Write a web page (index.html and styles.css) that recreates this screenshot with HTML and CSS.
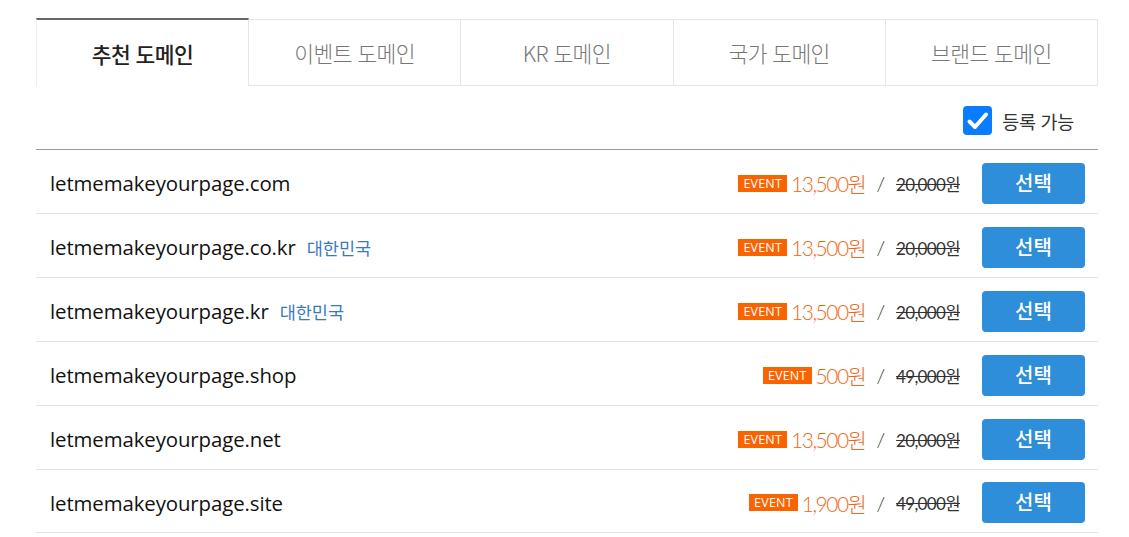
FILE: index.html
```html
<!DOCTYPE html>
<html lang="ko">
<head>
<meta charset="utf-8">
<link rel="stylesheet" href="styles.css">
</head>
<body>
<div class="wrap">
  <div class="tabs">
    <div class="tab active">추천 도메인</div>
    <div class="tab">이벤트 도메인</div>
    <div class="tab">KR 도메인</div>
    <div class="tab">국가 도메인</div>
    <div class="tab">브랜드 도메인</div>
  </div>
  <div class="filter">
    <span class="check"><svg viewBox="0 0 29 29" width="29" height="29"><rect x="0" y="0" width="29" height="29" rx="4" fill="#0a7cff"/><path d="M6.5 15.5 L12 21 L23 8.5" fill="none" stroke="#fff" stroke-width="4" stroke-linecap="round" stroke-linejoin="round"/></svg></span>
    <span class="filter-label">등록 가능</span>
  </div>
  <div class="list">
    <div class="row">
      <div class="name">letmemakeyourpage.com</div>
      <div class="price"><span class="badge">EVENT</span><span class="sale">13,500원</span><span class="slash">/</span><span class="orig">20,000원</span></div>
      <button class="btn">선택</button>
    </div>
    <div class="row">
      <div class="name">letmemakeyourpage.co.kr<span class="country">대한민국</span></div>
      <div class="price"><span class="badge">EVENT</span><span class="sale">13,500원</span><span class="slash">/</span><span class="orig">20,000원</span></div>
      <button class="btn">선택</button>
    </div>
    <div class="row">
      <div class="name">letmemakeyourpage.kr<span class="country">대한민국</span></div>
      <div class="price"><span class="badge">EVENT</span><span class="sale">13,500원</span><span class="slash">/</span><span class="orig">20,000원</span></div>
      <button class="btn">선택</button>
    </div>
    <div class="row">
      <div class="name">letmemakeyourpage.shop</div>
      <div class="price"><span class="badge">EVENT</span><span class="sale">500원</span><span class="slash">/</span><span class="orig">49,000원</span></div>
      <button class="btn">선택</button>
    </div>
    <div class="row">
      <div class="name">letmemakeyourpage.net</div>
      <div class="price"><span class="badge">EVENT</span><span class="sale">13,500원</span><span class="slash">/</span><span class="orig">20,000원</span></div>
      <button class="btn">선택</button>
    </div>
    <div class="row">
      <div class="name">letmemakeyourpage.site</div>
      <div class="price"><span class="badge">EVENT</span><span class="sale">1,900원</span><span class="slash">/</span><span class="orig">49,000원</span></div>
      <button class="btn">선택</button>
    </div>
  </div>
</div>
</body>
</html>
```

FILE: styles.css
```css
* { box-sizing: border-box; }
html, body { margin: 0; padding: 0; background: #fff; }
body {
  font-family: "Noto Sans CJK KR", "Noto Sans", sans-serif;
  color: #222;
}
.wrap {
  width: 1062px;
  margin: 18px 0 0 36px;
}
.tabs {
  display: grid;
  grid-template-columns: 213px repeat(4, 1fr);
  height: 68px;
}
.tab {
  display: flex;
  align-items: center;
  justify-content: center;
  border-top: 1px solid #e6e6e6;
  border-right: 1px solid #e6e6e6;
  border-bottom: 1px solid #e6e6e6;
  margin-top: 1px;
  font-size: 21.5px;
  font-weight: 300;
  color: #777;
  letter-spacing: -0.6px;
}
.tab.active {
  margin-top: 0;
  border-top: 2px solid #666;
  border-left: 1px solid #eee;
  border-bottom: none;
  color: #222;
  font-weight: 500;
  padding-top: 1px;
}
.filter {
  display: flex;
  align-items: center;
  justify-content: flex-end;
  height: 63px;
  padding-right: 24px;
  padding-top: 6px;
}
.check { display: flex; width: 29px; height: 29px; margin-right: 1px; }
.filter-label {
  margin-left: 9px;
  font-size: 18.5px;
  color: #333;
  font-weight: 400;
  letter-spacing: -0.3px;
}
.list { border-top: 1px solid #999; }
.row {
  display: flex;
  align-items: center;
  height: 64px;
  border-bottom: 1px solid #e3e3e3;
  padding: 3px 13px 0 14px;
}
.row:last-child { height: 63px; }
.name {
  flex: 1;
  font-family: "Open Sans", "Noto Sans", sans-serif;
  font-size: 20.4px;
  color: #111;
  display: flex;
  align-items: baseline;
  letter-spacing: -0.1px;
}
.country {
  font-family: "Noto Sans CJK KR", sans-serif;
  font-size: 17.5px;
  color: #3a7bbf;
  margin-left: 11px;
  letter-spacing: 0;
}
.price {
  display: flex;
  align-items: center;
  font-family: Lato, "Noto Sans CJK KR", sans-serif;
  font-weight: 300;
}
.badge {
  background: #fa6400;
  color: #fff;
  font-family: "Open Sans", sans-serif;
  font-size: 12.5px;
  font-weight: 400;
  height: 17px;
  line-height: 17px;
  padding: 0 5px;
  margin-right: 4px;
  letter-spacing: 0.2px;
}
.sale {
  color: #f0691a;
  font-size: 21px;
  letter-spacing: -1.5px;
}
.slash {
  font-size: 20px;
  color: #333;
  margin: 0 11px 0 11px;
}
.orig {
  font-size: 17px;
  font-weight: 400;
  color: #333;
  text-decoration: line-through;
  letter-spacing: -0.7px;
}
.btn {
  margin-left: 22px;
  width: 103px;
  height: 41px;
  border: none;
  border-radius: 4px;
  background: #2e8ed9;
  color: #fff;
  font-family: "Noto Sans CJK KR", sans-serif;
  font-size: 20px;
  font-weight: 500;
  padding: 0 0 2px;
}
```
